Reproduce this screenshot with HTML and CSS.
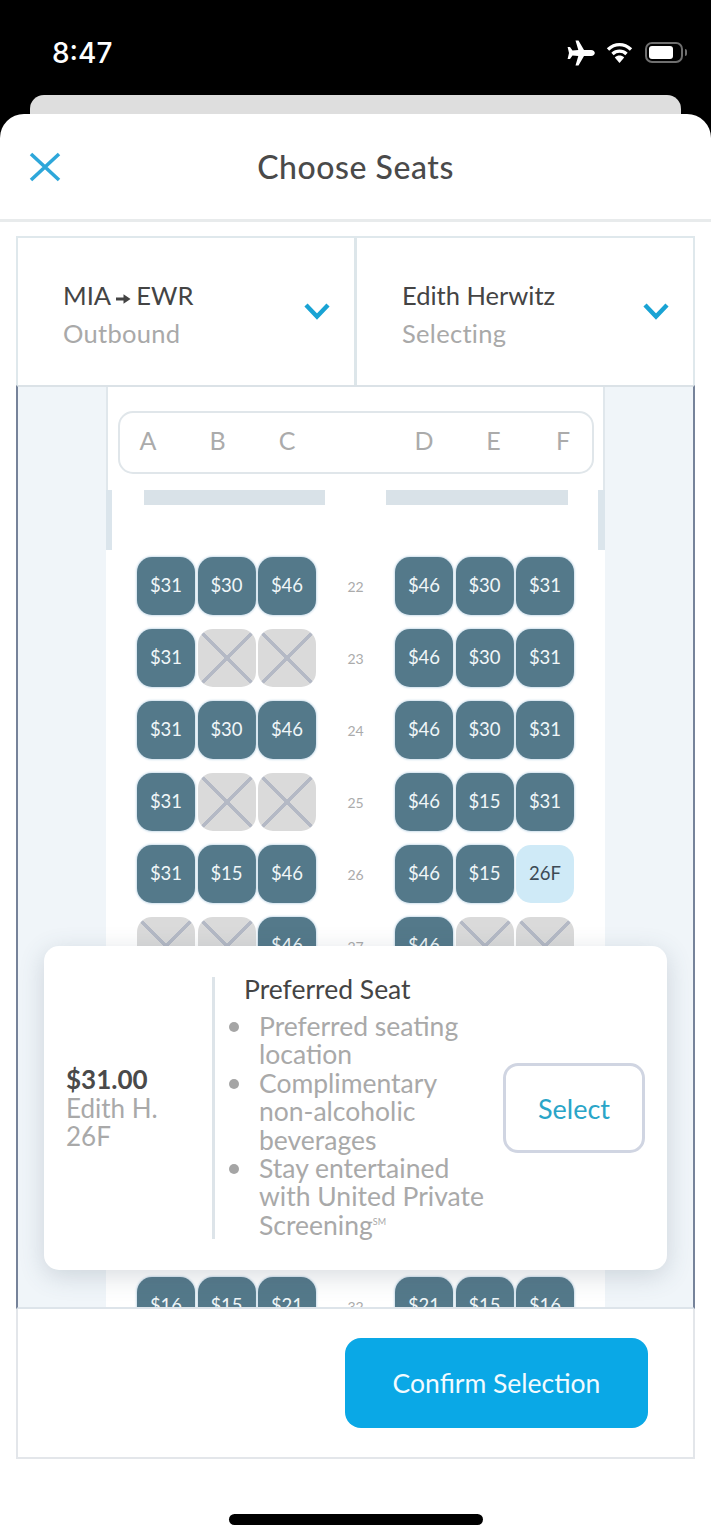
FILE: index.html

```html
<!DOCTYPE html>
<html>
<head>
    <title>Choose Seats</title>
    <link rel="stylesheet" href="styles.css">
</head>
<body>
    <div class="phone">
        <!-- Status bar -->
        <div class="status-bar">
            <span class="time">8:47</span>
            <div class="status-icons">
                <svg width="28" height="26" viewBox="0 0 28 26">
                    <path d="M8.5 0.5 L11.5 0.5 L17 10 L24 10 C26.5 10 27.8 11.8 27.8 13 C27.8 14.2 26.5 16 24 16 L17 16 L11.5 25.5 L8.5 25.5 L11.3 16 L5.5 15.6 L3 19 L0.6 19 L2 13 L0.6 7 L3 7 L5.5 10.4 L11.3 10 Z" fill="#fff"/>
                </svg>
                <svg width="27" height="22" viewBox="0 0 27 22">
                    <path d="M2 7.5 C9 1 18 1 25 7.5" fill="none" stroke="#fff" stroke-width="3.4"/>
                    <path d="M6.5 12 C10.5 8.2 16.5 8.2 20.5 12" fill="none" stroke="#fff" stroke-width="3.4"/>
                    <path d="M8.8 15.4 C11.6 13 15.4 13 18.2 15.4 L13.5 21 Z" fill="#fff"/>
                </svg>
                <div class="battery">
                    <div class="battery-level"></div>
                </div>
                <div class="battery-cap"></div>
            </div>
        </div>

        <div class="back-card"></div>

        <div class="sheet">
            <div class="sheet-header">
                <svg class="close-icon" width="32" height="30" viewBox="0 0 32 30">
                    <path d="M2 2 L30 28 M30 2 L2 28" fill="none" stroke="#2ea7da" stroke-width="3.6"/>
                </svg>
                <h1 class="sheet-title">Choose Seats</h1>
            </div>

            <div class="panel">
                <div class="selectors">
                    <div class="selector">
                        <div>
                            <div class="selector-main">MIA
                                <svg class="route-arrow" width="15" height="12" viewBox="0 0 16 12">
                                    <path d="M0 4.4 L8 4.4 L8 1 L15.5 6 L8 11 L8 7.6 L0 7.6 Z" fill="#444"/>
                                </svg>
                                EWR</div>
                            <div class="selector-sub">Outbound</div>
                        </div>
                        <svg class="chevron" width="26" height="18" viewBox="0 0 26 18">
                            <path d="M2 3 L13 14.5 L24 3" fill="none" stroke="#19a3d4" stroke-width="4.4"/>
                        </svg>
                    </div>
                    <div class="selector">
                        <div>
                            <div class="selector-main">Edith Herwitz</div>
                            <div class="selector-sub">Selecting</div>
                        </div>
                        <svg class="chevron" width="26" height="18" viewBox="0 0 26 18">
                            <path d="M2 3 L13 14.5 L24 3" fill="none" stroke="#19a3d4" stroke-width="4.4"/>
                        </svg>
                    </div>
                </div>

                <div class="seat-map">
                    <div class="cabin">
                        <div class="cabin-head">
                            <div class="letters">
                                <span class="letter">A</span>
                                <span class="letter">B</span>
                                <span class="letter">C</span>
                                <span class="letter letter-after-aisle">D</span>
                                <span class="letter">E</span>
                                <span class="letter">F</span>
                            </div>
                        </div>

                        <div class="cabin-top">
                            <div class="edge"></div>
                            <div class="shelf shelf-left"></div>
                            <div class="shelf shelf-right"></div>
                            <div class="edge edge-right"></div>
                        </div>

                        <div class="rows">
                            <div class="row">
                                <div class="seat">$31</div><div class="seat">$30</div><div class="seat">$46</div>
                                <div class="row-num">22</div>
                                <div class="seat">$46</div><div class="seat">$30</div><div class="seat">$31</div>
                            </div>
                            <div class="row">
                                <div class="seat">$31</div><div class="seat taken"></div><div class="seat taken"></div>
                                <div class="row-num">23</div>
                                <div class="seat">$46</div><div class="seat">$30</div><div class="seat">$31</div>
                            </div>
                            <div class="row">
                                <div class="seat">$31</div><div class="seat">$30</div><div class="seat">$46</div>
                                <div class="row-num">24</div>
                                <div class="seat">$46</div><div class="seat">$30</div><div class="seat">$31</div>
                            </div>
                            <div class="row">
                                <div class="seat">$31</div><div class="seat taken"></div><div class="seat taken"></div>
                                <div class="row-num">25</div>
                                <div class="seat">$46</div><div class="seat">$15</div><div class="seat">$31</div>
                            </div>
                            <div class="row">
                                <div class="seat">$31</div><div class="seat">$15</div><div class="seat">$46</div>
                                <div class="row-num">26</div>
                                <div class="seat">$46</div><div class="seat">$15</div><div class="seat selected">26F</div>
                            </div>
                            <div class="row">
                                <div class="seat taken"></div><div class="seat taken"></div><div class="seat">$46</div>
                                <div class="row-num">27</div>
                                <div class="seat">$46</div><div class="seat taken"></div><div class="seat taken"></div>
                            </div>
                            <!-- rows 28-31 sit behind the seat card -->
                            <div class="rows-covered"></div>
                            <div class="row">
                                <div class="seat">$16</div><div class="seat">$15</div><div class="seat">$21</div>
                                <div class="row-num">32</div>
                                <div class="seat">$21</div><div class="seat">$15</div><div class="seat">$16</div>
                            </div>
                        </div>
                    </div>

                    <!-- Seat card -->
                    <div class="seat-card">
                        <div class="seat-summary">
                            <div class="seat-price">$31.00</div>
                            <div>Edith H.</div>
                            <div>26F</div>
                        </div>
                        <div class="seat-info">
                            <div class="seat-type">Preferred Seat</div>
                            <ul class="perks">
                                <li>Preferred seating location</li>
                                <li>Complimentary <span class="no-break">non-alcoholic</span> beverages</li>
                                <li>Stay entertained with United Private Screening<sup>SM</sup></li>
                            </ul>
                        </div>
                        <button class="select-button">Select</button>
                    </div>
                </div>

                <div class="panel-footer">
                    <button class="confirm-button">Confirm Selection</button>
                </div>
            </div>

            <div class="home-indicator"></div>
        </div>
    </div>
</body>
</html>
```

FILE: styles.css

```css
* {
    box-sizing: border-box;
}

body {
    margin: 0;
    background: #000;
    font-family: Lato, "Open Sans", sans-serif;
}

.phone {
    width: 711px;
    height: 1539px;
    overflow: hidden;
    background: #000;
}

.status-bar {
    height: 95px;
    padding: 10px 24px 0 52px;
    display: flex;
    align-items: center;
    justify-content: space-between;
}

.time {
    font-family: Inter, sans-serif;
    font-size: 28px;
    font-weight: 500;
    color: #fff;
}

.status-icons {
    display: flex;
    align-items: center;
    gap: 11px;
}

.battery {
    width: 38px;
    height: 21px;
    border: 2px solid #6f6f6f;
    border-radius: 7px;
    padding: 2px;
    margin-left: 1px;
}

.battery-level {
    width: 24px;
    height: 100%;
    background: #fff;
    border-radius: 3px;
}

.battery-cap {
    width: 2px;
    height: 7px;
    margin-left: -9px;
    background: #6f6f6f;
    border-radius: 0 2px 2px 0;
}

.back-card {
    height: 19px;
    margin: 0 30px;
    background: #dedede;
    border-radius: 14px 14px 0 0;
}

.sheet {
    height: 1425px;
    background: #fff;
    border-radius: 24px 24px 0 0;
    display: flex;
    flex-direction: column;
}

.sheet-header {
    height: 108px;
    flex-shrink: 0;
    display: flex;
    align-items: center;
    justify-content: center;
    border-bottom: 3px solid #e8ebec;
    position: relative;
}

.close-icon {
    position: absolute;
    left: 29px;
    top: 38px;
}

.sheet-title {
    margin: 0;
    font-size: 32px;
    font-weight: 500;
    letter-spacing: 0.55px;
    color: #4a4a4a;
}

.panel {
    height: 1223px;
    margin: 14px 16px 0;
    display: flex;
    flex-direction: column;
}

.selectors {
    height: 149px;
    flex-shrink: 0;
    display: grid;
    grid-template-columns: 339px 340px;
    border: 2px solid #dfe8ec;
    border-bottom: 0;
}

.selector {
    display: flex;
    align-items: center;
    justify-content: space-between;
    padding: 4px 28px 0 45px;
}

.selector:first-child {
    padding-right: 24px;
    border-right: 3px solid #dde6ea;
}

.selector-main {
    font-size: 25.5px;
    line-height: 38px;
    color: #444;
}

.route-arrow {
    margin: 0 -1px;
}

.selector-sub {
    font-size: 25.5px;
    letter-spacing: 0.3px;
    line-height: 38px;
    color: #a9a9a9;
}

.chevron {
    margin-top: -6px;
}

.seat-map {
    height: 924px;
    flex-shrink: 0;
    position: relative;
    overflow: hidden;
    background: #f0f5f9;
    border-top: 2px solid #dbe2e7;
    border-bottom: 2px solid #dde4ea;
    border-left: 2px solid #76839a;
    border-right: 2px solid #76839a;
}

.cabin {
    width: 499px;
    margin-left: 88px;
    background: #fff;
    min-height: 100%;
}

.cabin-head {
    height: 103px;
    padding: 24px 9px 0 10px;
    border-left: 2px solid #e0e7ec;
    border-right: 2px solid #e0e7ec;
}

.letters {
    height: 63px;
    padding-left: 18px;
    display: flex;
    align-items: center;
    gap: 49.5px;
    padding-bottom: 5px;
    border: 2px solid #e0e6ea;
    border-radius: 15px;
    font-size: 25px;
    color: #ababab;
}

.letter {
    width: 20px;
    text-align: center;
}

.letter-after-aisle {
    margin-left: 67.5px;
}

.cabin-top {
    height: 60px;
    display: flex;
}

.edge {
    width: 6px;
    background: #dbe5ec;
}

.edge-right {
    width: 7px;
    margin-left: 30px;
}

.shelf {
    width: 181px;
    height: 15px;
    background: #d9e2e8;
}

.shelf-left {
    margin-left: 32px;
}

.shelf-right {
    width: 182px;
    margin-left: 61px;
}

.rows {
    margin-top: 7px;
    padding-left: 31px;
    display: flex;
    flex-direction: column;
    gap: 14px;
}

.row {
    display: grid;
    grid-template-columns: repeat(3, 58px) 74px repeat(3, 58px);
    column-gap: 2.5px;
    height: 58px;
}

.rows-covered {
    height: 274px;
}

.seat {
    height: 58px;
    display: flex;
    align-items: center;
    justify-content: center;
    padding-bottom: 3px;
    background: #54798a;
    border-radius: 15px;
    box-shadow: 0 0 2px 1px #cfe0ec;
    font-size: 18.5px;
    color: #f0f6f8;
}

.seat.taken {
    background:
        linear-gradient(45deg, transparent calc(50% - 1.5px), #b4b9c5 calc(50% - 1.5px), #b4b9c5 calc(50% + 1.5px), transparent calc(50% + 1.5px)),
        linear-gradient(-45deg, transparent calc(50% - 1.5px), #b4b9c5 calc(50% - 1.5px), #b4b9c5 calc(50% + 1.5px), transparent calc(50% + 1.5px)),
        #dadada;
    box-shadow: none;
}

.seat.selected {
    background: #cfeaf7;
    box-shadow: none;
    color: #3d4a55;
}

.row-num {
    display: flex;
    align-items: center;
    justify-content: center;
    font-size: 14px;
    color: #ababab;
}

.seat-card {
    position: absolute;
    left: 26px;
    top: 559px;
    width: 623px;
    height: 324px;
    padding: 31px 22px 31px 22px;
    display: flex;
    align-items: center;
    background: #fff;
    border-radius: 15px;
    box-shadow: 0 6px 26px rgba(60, 80, 100, 0.2);
}

.seat-summary {
    width: 146px;
    flex-shrink: 0;
    font-size: 26px;
    line-height: 28.5px;
    color: #a9a9a9;
}

.seat-price {
    font-weight: 700;
    color: #4a4a4a;
}

.seat-info {
    height: 100%;
    width: 290px;
    flex-shrink: 0;
    border-left: 3px solid #dde4e9;
    padding-left: 29px;
}

.seat-type {
    font-size: 26.5px;
    line-height: 28px;
    margin-top: -2px;
    color: #444;
}

.perks {
    margin: 9px 0 0;
    padding: 0 0 0 15px;
    width: 243px;
    list-style: none;
    font-size: 26.5px;
    line-height: 28.4px;
    color: #a9a9a9;
}

.no-break {
    white-space: nowrap;
}

.perks li {
    position: relative;
}

.perks li::before {
    content: "";
    position: absolute;
    left: -30px;
    top: 10px;
    width: 10px;
    height: 10px;
    border-radius: 50%;
    background: #a5a5a5;
}

.perks sup {
    font-size: 9px;
    line-height: 0;
}

.select-button {
    width: 142px;
    height: 90px;
    margin-left: auto;
    background: #fff;
    border: 3px solid #d0d5e2;
    border-radius: 15px;
    font-family: inherit;
    font-size: 27px;
    color: #2aa5c8;
}

.panel-footer {
    height: 150px;
    flex-shrink: 0;
    display: flex;
    justify-content: flex-end;
    padding: 29px 45px 0 0;
    border: 2px solid #e3e6ea;
    border-top: 0;
}

.confirm-button {
    width: 303px;
    height: 90px;
    border: 0;
    border-radius: 16px;
    background: #0aa8e6;
    font-family: inherit;
    font-size: 26.5px;
    color: #f2fbff;
}

.home-indicator {
    width: 254px;
    height: 11px;
    margin: 55px auto 0;
    background: #000;
    border-radius: 6px;
}
```
